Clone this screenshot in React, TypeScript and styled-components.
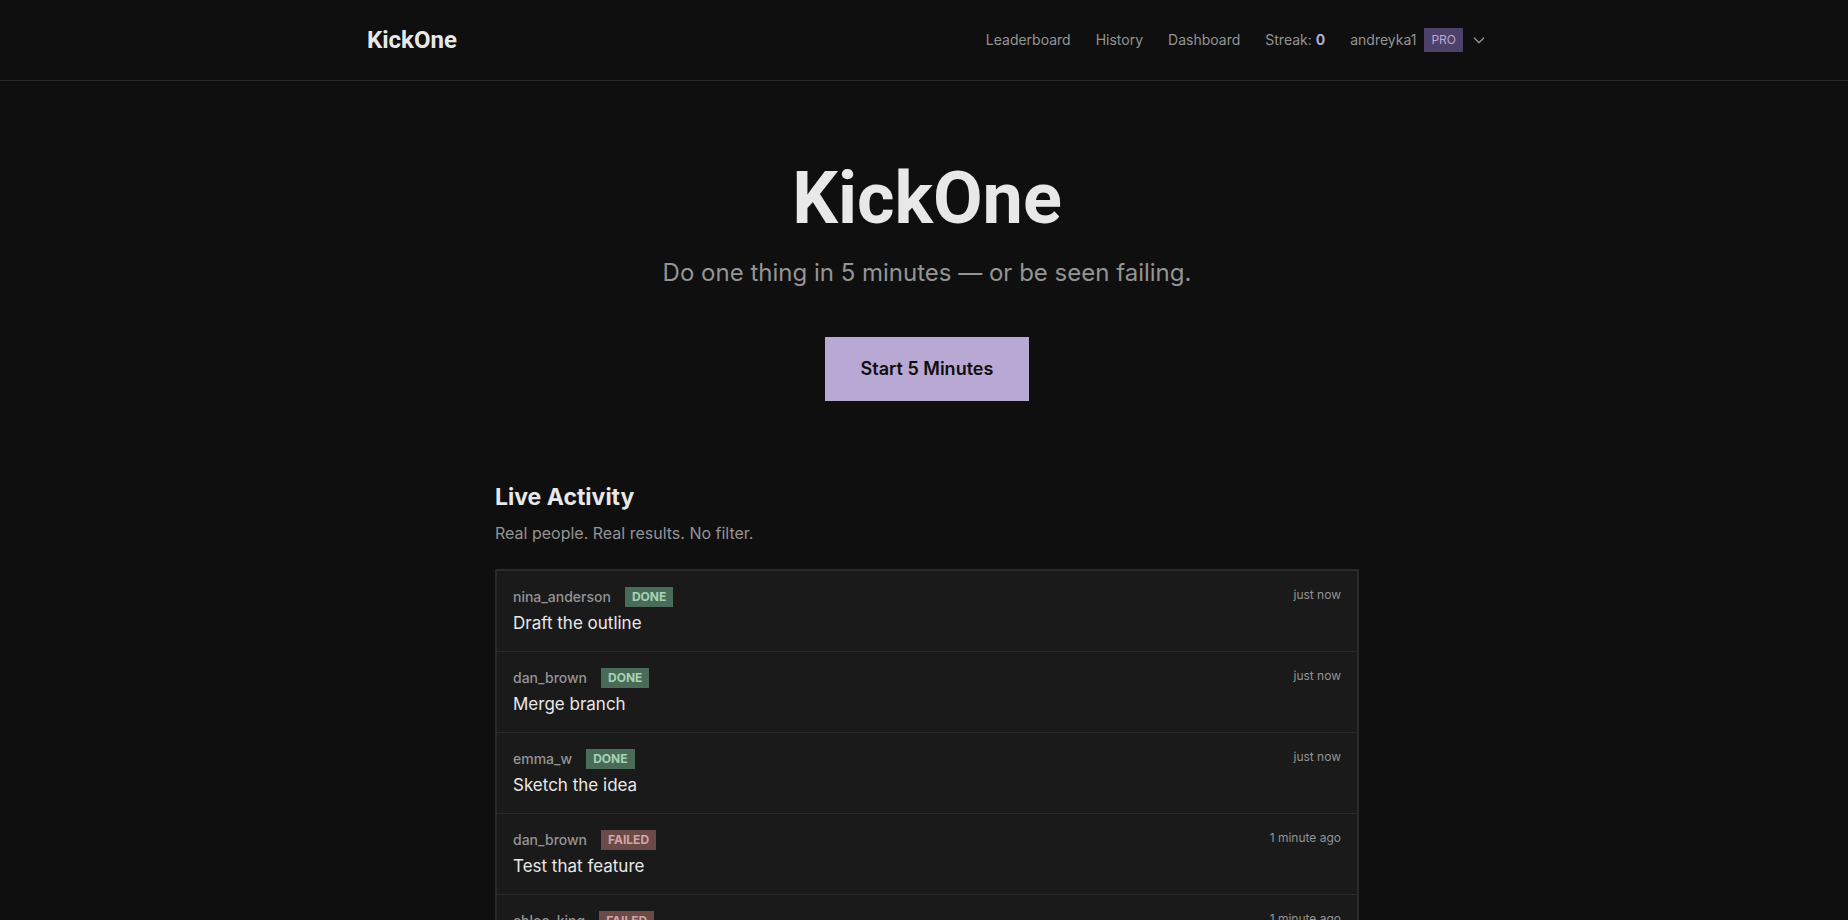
import React from 'react';
import styled, { createGlobalStyle } from 'styled-components';

const color = {
  bg: '#0f0f0f',
  surface: '#1a1a1a',
  line: '#2a2a2a',
  text: '#e8e8e8',
  muted: '#949494',
  accent: '#b8a8d4',
  accentDim: '#4d4169',
};

const displayFont = `Roboto, 'Liberation Sans', sans-serif`;

const GlobalStyle = createGlobalStyle`
  *, *::before, *::after { box-sizing: border-box; }
  html { background: ${color.bg}; scrollbar-width: none; }
  body {
    margin: 0;
    background: ${color.bg};
    color: ${color.text};
    font-family: Inter, 'Liberation Sans', sans-serif;
    font-size: 16px;
    line-height: 24px;
  }
  h1, h2, p, ul { margin: 0; padding: 0; }
  button { font-family: inherit; border: 0; cursor: pointer; }
`;

const Header = styled.header`
  padding-left: 6px;
  border-bottom: 1px solid ${color.line};
`;

const HeaderInner = styled.div`
  display: flex;
  align-items: center;
  justify-content: space-between;
  max-width: 1152px;
  min-height: 80px;
  margin: 0 auto;
  padding: 0 16px;
`;

const Logo = styled.a`
  color: ${color.text};
  font: 700 24px/32px ${displayFont};
  text-decoration: none;
`;

const Nav = styled.nav`
  display: flex;
  align-items: center;
  gap: 25px;
  color: ${color.muted};
  font-size: 14px;
  line-height: 20px;
`;

const NavLink = styled.a`
  color: inherit;
  text-decoration: none;
`;

const StreakCount = styled.strong`
  color: ${color.accent};
  font-weight: 700;
`;

const UserMenu = styled.button`
  display: flex;
  align-items: center;
  gap: 8px;
  padding: 0;
  background: none;
  color: inherit;
  font-size: 14px;
  line-height: 20px;
`;

const PlanBadge = styled.span`
  padding: 4px 7px;
  background: ${color.accentDim};
  color: ${color.accent};
  font-size: 12px;
  line-height: 16px;
`;

const Main = styled.main`
  padding: 80px 0 80px 6px;
`;

const Hero = styled.section`
  display: flex;
  flex-direction: column;
  align-items: center;
  text-align: center;
`;

const Title = styled.h1`
  font: 700 72px/76px ${displayFont};
`;

const Tagline = styled.p`
  margin-top: 20px;
  color: ${color.muted};
  font-size: 24px;
  line-height: 32px;
`;

const StartButton = styled.button`
  margin-top: 48px;
  padding: 18px 36px;
  background: ${color.accent};
  color: ${color.bg};
  font-size: 18px;
  font-weight: 600;
  line-height: 28px;
`;

const Activity = styled.section`
  max-width: 896px;
  margin: 80px auto 0;
  padding: 0 16px;
`;

const ActivityTitle = styled.h2`
  font-size: 23px;
  font-weight: 700;
  line-height: 32px;
`;

const ActivityNote = styled.p`
  margin-top: 8px;
  color: ${color.muted};
`;

const Feed = styled.ul`
  margin-top: 24px;
  border: 2px solid ${color.line};
  background: ${color.surface};
  list-style: none;
`;

const FeedRow = styled.li`
  display: flex;
  justify-content: space-between;
  align-items: flex-start;
  gap: 16px;
  min-height: 81px;
  padding: 16px;

  &:not(:last-child) { border-bottom: 1px solid ${color.line}; }
`;

const RowHead = styled.div`
  display: flex;
  align-items: center;
  gap: 14px;
  line-height: 20px;
`;

const UserName = styled.span`
  color: ${color.muted};
  font-size: 14px;
  font-weight: 500;
`;

const Status = styled.span<{ $failed: boolean }>`
  padding: 2px 7px;
  background: ${(p) => (p.$failed ? '#6b4a4a' : '#4a6b57')};
  color: ${(p) => (p.$failed ? '#d4a5a5' : '#a5d4b4')};
  font-size: 12px;
  font-weight: 700;
  line-height: 16px;
`;

const Task = styled.p`
  margin-top: 4px;
  font-size: 17px;
`;

const Time = styled.time`
  color: ${color.muted};
  font-size: 12px;
  line-height: 16px;
  white-space: nowrap;
`;

type Entry = { user: string; failed?: boolean; task?: string; when: string };

const entries: Entry[] = [
  { user: 'nina_anderson', task: 'Draft the outline', when: 'just now' },
  { user: 'dan_brown', task: 'Merge branch', when: 'just now' },
  { user: 'emma_w', task: 'Sketch the idea', when: 'just now' },
  { user: 'dan_brown', failed: true, task: 'Test that feature', when: '1 minute ago' },
  { user: 'chloe_king', failed: true, when: '1 minute ago' },
];

function ChevronDown() {
  return (
    <svg width="16" height="16" viewBox="0 0 24 24" fill="none" stroke="currentColor" strokeWidth="2" aria-hidden="true">
      <path d="M19 9l-7 7-7-7" strokeLinecap="round" strokeLinejoin="round" />
    </svg>
  );
}

export default function App() {
  return (
    <>
      <GlobalStyle />
      <Header>
        <HeaderInner>
          <Logo href="#">KickOne</Logo>
          <Nav>
            <NavLink href="#leaderboard">Leaderboard</NavLink>
            <NavLink href="#history">History</NavLink>
            <NavLink href="#dashboard">Dashboard</NavLink>
            <span>
              Streak: <StreakCount>0</StreakCount>
            </span>
            <UserMenu type="button">
              andreyka1
              <PlanBadge>PRO</PlanBadge>
              <ChevronDown />
            </UserMenu>
          </Nav>
        </HeaderInner>
      </Header>
      <Main>
        <Hero>
          <Title>KickOne</Title>
          <Tagline>Do one thing in 5 minutes — or be seen failing.</Tagline>
          <StartButton type="button">Start 5 Minutes</StartButton>
        </Hero>
        <Activity>
          <ActivityTitle>Live Activity</ActivityTitle>
          <ActivityNote>Real people. Real results. No filter.</ActivityNote>
          <Feed>
            {entries.map((e, i) => (
              <FeedRow key={i}>
                <div>
                  <RowHead>
                    <UserName>{e.user}</UserName>
                    <Status $failed={!!e.failed}>{e.failed ? 'FAILED' : 'DONE'}</Status>
                  </RowHead>
                  {e.task && <Task>{e.task}</Task>}
                </div>
                <Time>{e.when}</Time>
              </FeedRow>
            ))}
          </Feed>
        </Activity>
      </Main>
    </>
  );
}
